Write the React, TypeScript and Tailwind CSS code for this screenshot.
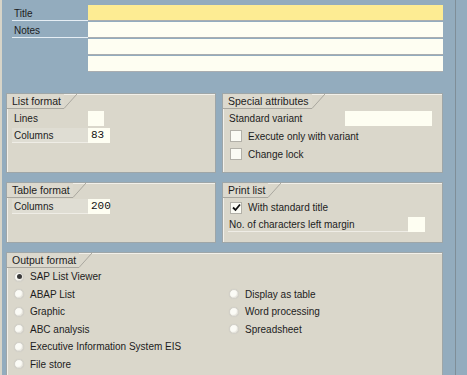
import React from "react";

const font = { fontFamily: '"Liberation Sans", Arial, sans-serif' };

function GroupBox({ title, className, children }: { title: string; className?: string; children?: React.ReactNode }) {
  return (
    <div className={"bg-[#dad7cb] border border-[#9ea6a8] shadow-[inset_1px_1px_0_#f2f0ea] " + (className ?? "")}>
      <div className="flex items-end h-[15px]">
        <div className="h-[15px] pl-[5px] pr-[3px] border-b border-[#a9a79f] text-[10.5px] leading-[14px] text-[#1c1c1c] bg-[#dcd9ce]">{title}</div>
        <svg width="13" height="15" viewBox="0 0 13 15" className="block">
          <line x1="0" y1="14.5" x2="13" y2="0" stroke="#a9a79f" strokeWidth="1" />
        </svg>
      </div>
      {children}
    </div>
  );
}

function Field({ w, value }: { w: number; value?: string }) {
  return (
    <div
      className="h-[15px] bg-[#fefef2] text-[11px] leading-[15px] pl-[3px] text-[#111]"
      style={{ width: w, fontFamily: '"Liberation Mono", monospace' }}
    >
      {value}
    </div>
  );
}

function Checkbox({ checked }: { checked?: boolean }) {
  return (
    <div className="w-[12px] h-[12px] bg-[#fbfbf4] border border-[#b2b0a8] flex items-center justify-center">
      {checked && (
        <svg width="9" height="9" viewBox="0 0 9 9">
          <path d="M1 4.5 L3.5 7 L8 1.5" stroke="#111" strokeWidth="1.8" fill="none" />
        </svg>
      )}
    </div>
  );
}

function Radio({ selected }: { selected?: boolean }) {
  return (
    <div className="w-[10px] h-[10px] rounded-full bg-[#fbfbf6] shadow-[inset_-1px_-1px_1px_#e4e2da,0_0_1px_#c8c6be] border border-[#d2d0c8] flex items-center justify-center">
      {selected && <div className="w-[5px] h-[5px] rounded-full bg-[#3a3a3a]" />}
    </div>
  );
}

function RadioRow({ label, selected }: { label: string; selected?: boolean }) {
  return (
    <div className="h-[17.5px] flex items-center gap-[6px]">
      <Radio selected={selected} />
      <span className="text-[10px] text-[#1c1c1c]">{label}</span>
    </div>
  );
}

export default function App() {
  return (
    <div className="w-[467px] h-[375px] overflow-hidden bg-[#93acbe] flex" style={font}>
      <div className="w-[2px] h-full bg-[#d7d4c8]" />
      <div className="w-[454px] h-full border-r border-[#7f8e98] pl-[4px] pr-[12px] pt-[5px]">
        {/* top fields */}
        <div className="flex flex-col gap-[1px] pl-[6px]">
          {["Title", "Notes", "", ""].map((l, i) => (
            <div key={i} className="flex h-[16px]">
              <div className={"w-[76px] h-[16px] pl-[2px] pt-[1px] text-[10px] leading-[15px] text-[#1c1c1c] " + (l ? "border-b border-[#e6eef4]" : "")}>{l}</div>
              <div className={"flex-1 h-[16px] border-b border-[#a9adb0] " + (i === 0 ? "bg-[#fdec93]" : "bg-[#fefef2]")} />
            </div>
          ))}
        </div>

        <div className="mt-[21px] grid grid-cols-[210px_221px] gap-x-[6px] gap-y-[9px]">
          <GroupBox title="List format" className="h-[80px]">
            <div className="pl-[5px] pt-[2px] flex flex-col gap-[2px]">
              <div className="flex items-center h-[15px]">
                <div className="w-[76px] text-[10px] pl-[2px] text-[#1c1c1c]">Lines</div>
                <Field w={16} />
              </div>
              <div className="flex items-center h-[15px]">
                <div className="w-[76px] h-[15px] leading-[15px] text-[10px] pl-[2px] text-[#1c1c1c] bg-[#dfddd3] border-b border-[#efede6]">Columns</div>
                <Field w={22} value="83" />
              </div>
            </div>
          </GroupBox>
          <GroupBox title="Special attributes" className="h-[80px]">
            <div className="pl-[5px] pt-[2px] flex flex-col">
              <div className="flex items-center h-[15px]">
                <div className="w-[117px] text-[10px] pl-[1px] text-[#1c1c1c]">Standard variant</div>
                <Field w={87} />
              </div>
              <div className="flex items-center h-[18px] gap-[6px] pl-[2px] mt-[1px]">
                <Checkbox />
                <span className="text-[10px] text-[#1c1c1c]">Execute only with variant</span>
              </div>
              <div className="flex items-center h-[18px] gap-[6px] pl-[2px]">
                <Checkbox />
                <span className="text-[10px] text-[#1c1c1c]">Change lock</span>
              </div>
            </div>
          </GroupBox>
          <GroupBox title="Table format" className="h-[61px]">
            <div className="pl-[5px] pt-[1px]">
              <div className="flex items-center h-[15px]">
                <div className="w-[76px] h-[15px] leading-[15px] text-[10px] pl-[2px] text-[#1c1c1c] bg-[#dfddd3] border-b border-[#efede6]">Columns</div>
                <Field w={22} value="200" />
              </div>
            </div>
          </GroupBox>
          <GroupBox title="Print list" className="h-[61px]">
            <div className="pl-[5px] pt-[1px] flex flex-col">
              <div className="flex items-center h-[17px] gap-[6px] pl-[2px]">
                <Checkbox checked />
                <span className="text-[10px] text-[#1c1c1c]">With standard title</span>
              </div>
              <div className="flex items-center h-[15px] mt-[1px]">
                <div className="w-[180px] h-[15px] leading-[15px] text-[10px] pl-[1px] text-[#1c1c1c] border-b border-[#efede6]">No. of characters left margin</div>
                <Field w={17} />
              </div>
            </div>
          </GroupBox>
          <GroupBox title="Output format" className="col-span-2 h-[140px]">
            <div className="pl-[7px] grid grid-cols-[215px_1fr]">
              <div className="flex flex-col">
                <RadioRow label="SAP List Viewer" selected />
                <RadioRow label="ABAP List" />
                <RadioRow label="Graphic" />
                <RadioRow label="ABC analysis" />
                <RadioRow label="Executive Information System EIS" />
                <RadioRow label="File store" />
              </div>
              <div className="flex flex-col pt-[17.5px]">
                <RadioRow label="Display as table" />
                <RadioRow label="Word processing" />
                <RadioRow label="Spreadsheet" />
              </div>
            </div>
          </GroupBox>
        </div>
      </div>
    </div>
  );
}
